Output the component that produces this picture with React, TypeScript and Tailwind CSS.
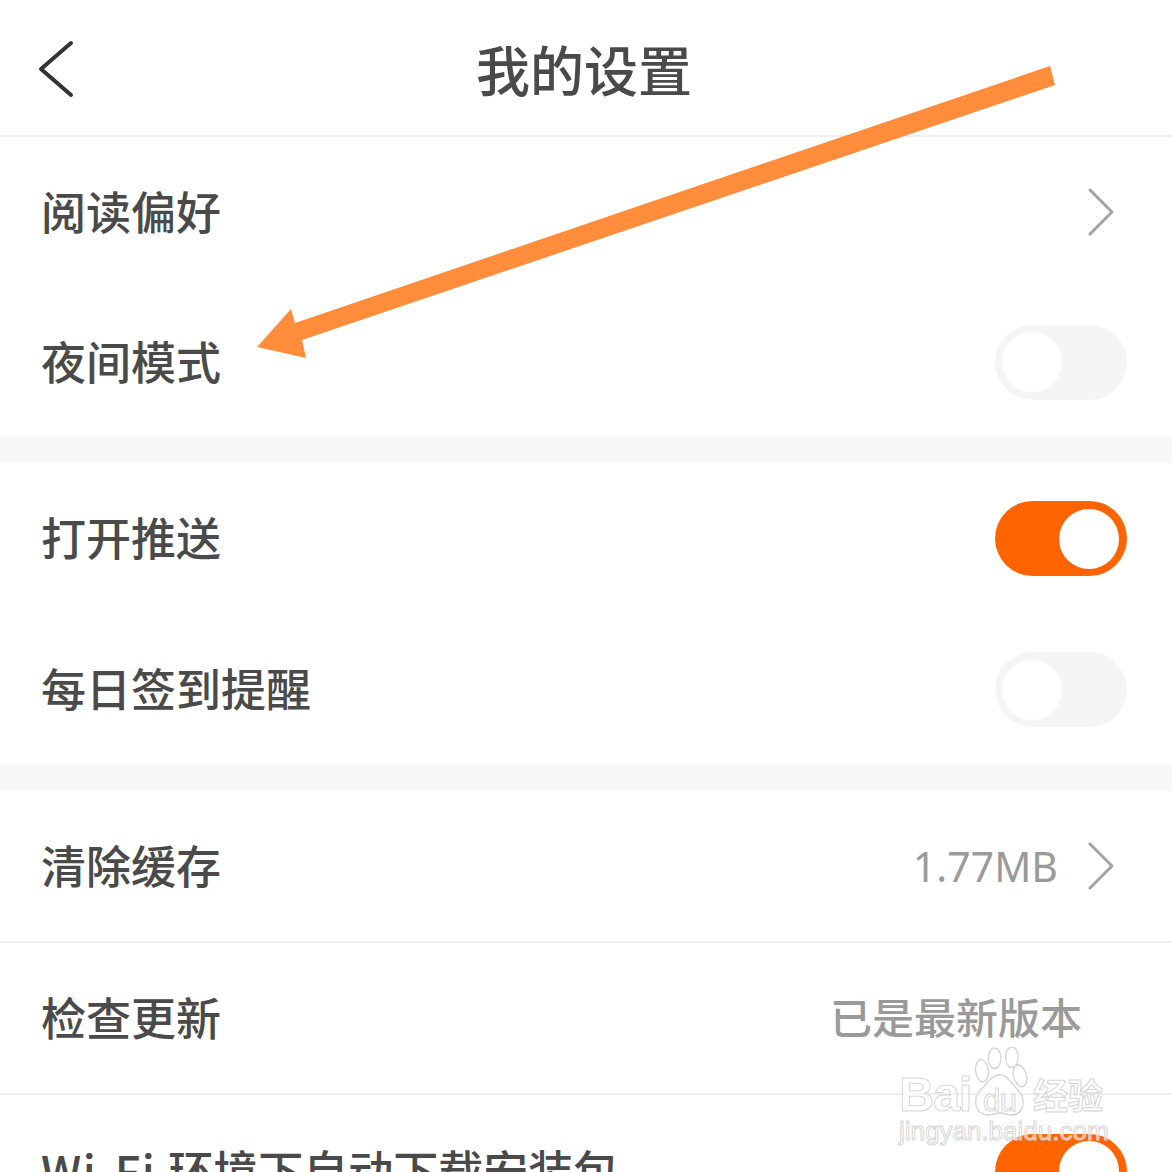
import React from 'react';

const FONT = '"Noto Sans CJK SC", "Noto Sans", sans-serif';
const WM_LATIN = "text-white/50 [-webkit-text-stroke:1px_#d6d6d6] [font-family:'Liberation_Sans',sans-serif]";

const Chevron = () => (
    <svg className="w-[28px] h-[48px] shrink-0 mr-[12px]" viewBox="0 0 28 48" fill="none" stroke="#a3a3a3" strokeWidth={3} strokeLinecap="round" strokeLinejoin="round">
        <path d="M3 2l22 22L3 46" />
    </svg>
);

const Toggle = ({ on }: { on?: boolean }) =>
    on ? (
        <div className="w-[132px] h-[75px] rounded-full bg-[#ff6400] flex items-center justify-end pr-[8px] shrink-0">
            <div className="w-[60px] h-[60px] rounded-full bg-white" />
        </div>
    ) : (
        <div className="w-[132px] h-[75px] rounded-full bg-[#f5f5f5] flex items-center pl-[7px] shrink-0">
            <div className="w-[60px] h-[60px] rounded-full bg-white" />
        </div>
    );

const Row = ({ label, children, border, h = 'h-[151px]' }: { label: React.ReactNode; children?: React.ReactNode; border?: boolean; h?: string }) => (
    <div className={`${h} flex items-center justify-between pl-[41px] pr-[45px] shrink-0 ${border ? 'border-b-2 border-[#eeeeee]' : ''}`}>
        <span className="text-[45px] leading-none font-medium text-[#4a4a4a] whitespace-nowrap pb-[4px]">{label}</span>
        {children}
    </div>
);

const Gap = () => <div className="h-[26px] bg-[#f7f7f7] shrink-0" />;

const Arrow = () => (
    <svg className="absolute left-0 top-0 w-[1172px] h-[400px] pointer-events-none" viewBox="0 0 1172 400">
        <polygon fill="#ff8d3c" points="1050,66 1055,85 302,340 306,358 257,347 291,309 295,323" />
    </svg>
);

const Watermark = () => (
    <div className="absolute left-[898px] top-[1044px] w-[212px] h-[105px] pointer-events-none">
        <svg className="absolute left-[74px] top-[3px] w-[58px] h-[70px]" viewBox="0 0 64 68" preserveAspectRatio="none" fill="rgba(255,255,255,0.5)" stroke="#d6d6d6" strokeWidth={1.5}>
            <ellipse cx="11" cy="23" rx="7" ry="11" transform="rotate(-10 11 23)" />
            <ellipse cx="25" cy="11" rx="7" ry="10" />
            <ellipse cx="44" cy="10" rx="7" ry="10" />
            <ellipse cx="53" cy="28" rx="7" ry="11" transform="rotate(-20 53 28)" />
            <path d="M31 27c8 0 12 8 20 15 9 9 7 24-8 24-4 0-8-2-12-2s-8 2-14 2C4 66 0 51 9 42c8-6 12-15 22-15z" />
        </svg>
        <span className={`absolute left-[1px] top-[26px] text-[49px] font-bold leading-none tracking-[-1.5px] ${WM_LATIN}`}>Bai</span>
        <span className={`absolute left-[85px] top-[41px] text-[31px] leading-none tracking-[-0.5px] ${WM_LATIN}`}>du</span>
        <span className="absolute left-[135px] top-[32px] text-[35px] font-bold leading-none whitespace-nowrap text-white/50 [-webkit-text-stroke:1px_#d6d6d6]">经验</span>
        <span className={`absolute left-[1px] top-[74px] text-[26px] leading-none whitespace-nowrap ${WM_LATIN}`}>jingyan.baidu.com</span>
    </div>
);

export default function App() {
    return (
        <div className="relative w-[1172px] h-[1172px] overflow-hidden bg-white flex flex-col" style={{ fontFamily: FONT }}>
            {/* Header */}
            <div className="relative h-[137px] shrink-0 flex items-center justify-center border-b-2 border-[#eeeeee] pt-[3px] pr-[4px]">
                <svg className="absolute left-[38px] top-[40px] w-[36px] h-[58px]" viewBox="0 0 36 58" fill="none" stroke="#333333" strokeWidth={4} strokeLinecap="round" strokeLinejoin="round">
                    <path d="M33 3L3 29l30 26" />
                </svg>
                <span className="text-[54px] leading-none font-medium text-[#4a4a4a]">我的设置</span>
            </div>

            <Row label="阅读偏好" h="h-[150px]">
                <Chevron />
            </Row>
            <Row label="夜间模式" h="h-[150px]">
                <Toggle />
            </Row>
            <Gap />
            <Row label="打开推送">
                <Toggle on />
            </Row>
            <Row label="每日签到提醒">
                <Toggle />
            </Row>
            <Gap />
            <Row label="清除缓存" border h="h-[152px]">
                <div className="flex items-center gap-[29px]">
                    <span className="text-[41px] leading-none text-[#9a9a9a] [font-family:'Noto_Sans',sans-serif]">1.77MB</span>
                    <Chevron />
                </div>
            </Row>
            <Row label="检查更新" border h="h-[152px]">
                <span className="text-[42px] leading-none font-medium text-[#9a9a9a] mr-[45px] pb-[4px]">已是最新版本</span>
            </Row>
            <Row
                label={
                    <>
                        <span className="tracking-[1.5px] mr-[2px]">Wi-Fi</span> 环境下自动下载安装包
                    </>
                }
                h="h-[152px]"
            >
                <Toggle on />
            </Row>

            <Arrow />
            <Watermark />
        </div>
    );
}
